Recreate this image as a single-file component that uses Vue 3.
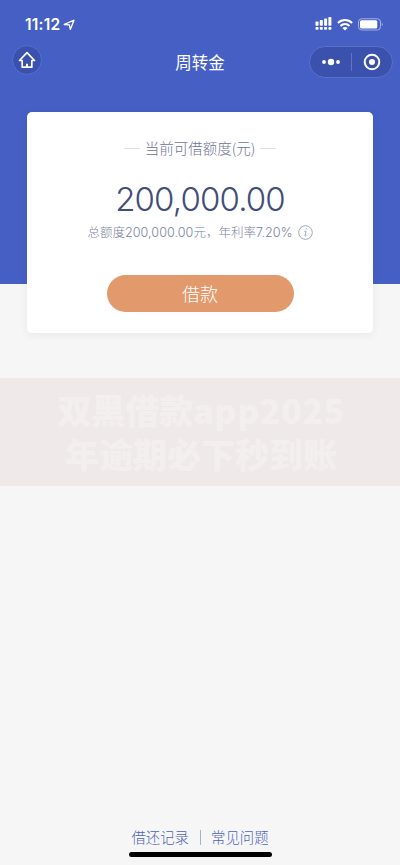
<script setup>
const amount = '200,000.00'
const signalBars = [5, 6.5, 8, 9.5]
const links = ['借还记录', '常见问题']
</script>

<template>
  <div class="page">
    <header class="status">
      <div class="clock">
        <span>11:12</span>
        <svg class="locate" viewBox="0 0 12 12" width="12" height="12">
          <path d="M1.200 5.500 11 1.200 7.300 10.400 6.400 5.800Z" fill="none" stroke="#fff" stroke-width="1.300" stroke-linejoin="round" />
        </svg>
      </div>
      <div class="indicators">
        <svg width="17" height="14" viewBox="0 0 17 14" fill="#fff">
          <template v-for="(h, i) in signalBars" :key="i">
            <rect :x="0.5 + i * 4.3" :y="9.5 - h" width="3" :height="h - 0.8" rx="0.7" />
            <rect :x="0.5 + i * 4.3" y="9.9" width="3" height="2.9" rx="0.8" />
          </template>
        </svg>
        <svg class="wifi" width="16" height="13" viewBox="0 0 16 13" fill="none" stroke="#fff" stroke-width="2.100">
          <path d="M.9 4.900C5 1 11 1 15.100 4.900" />
          <path d="M3.500 7.900C6 5.400 10 5.400 12.500 7.900" />
          <path d="M5.400 10C7 8.600 9 8.600 10.600 10L8 12.600Z" fill="#fff" stroke="none" />
        </svg>
        <svg class="battery" width="26" height="13" viewBox="0 0 26 13">
          <rect x=".5" y=".8" width="22" height="11.200" rx="3.200" fill="none" stroke="#a4b0e4" />
          <rect x="2" y="2.300" width="17.300" height="8.200" rx="1.500" fill="#fff" />
          <path d="M23.800 4.500Q25.900 6.400 23.800 8.300Z" fill="#a4b0e4" />
        </svg>
      </div>
    </header>

    <nav class="navbar">
      <button class="home" aria-label="首页">
        <svg width="18" height="18" viewBox="0 0 18 18" fill="none" stroke="#fff" stroke-width="1.700" stroke-linejoin="round">
          <path d="M9 1.700 1.500 9.500H4.200V16.200H13.800V9.500H16.500Z" />
          <path d="M9 16V12.700" stroke-width="2" />
        </svg>
      </button>
      <h1>周转金</h1>
      <div class="capsule">
        <svg width="20" height="8" viewBox="0 0 20 8" fill="#fff">
          <circle cx="3" cy="4" r="1.900" />
          <circle cx="10" cy="4" r="3.200" />
          <circle cx="17" cy="4" r="1.900" />
        </svg>
        <i class="split"></i>
        <svg width="18" height="18" viewBox="0 0 18 18">
          <circle cx="9" cy="9" r="7.300" fill="none" stroke="#fff" stroke-width="2" />
          <circle cx="9" cy="9" r="3" fill="#fff" />
        </svg>
      </div>
    </nav>

    <section class="card">
      <div class="label"><i></i><span>当前可借额度(元)</span><i></i></div>
      <div class="amount">{{ amount }}</div>
      <div class="detail">
        <span>总额度<b>{{ amount }}</b>元，年利率<b>7.20%</b></span>
        <svg width="15" height="15" viewBox="0 0 15 15" fill="none" stroke="#a1a6bd">
          <circle cx="7.500" cy="7.500" r="6.800" />
          <path d="M6.300 6.200H8L7 10.900H8.300" />
          <circle cx="8.200" cy="3.900" r=".7" fill="#a1a6bd" stroke="none" />
        </svg>
      </div>
      <button class="borrow">借款</button>
    </section>

    <div class="banner">双黑借款<span>app2025</span><br>年逾期必下秒到账</div>

    <footer class="footer">
      <div class="links">
        <a>{{ links[0] }}</a><i></i><a>{{ links[1] }}</a>
      </div>
      <div class="home-bar"></div>
    </footer>
  </div>
</template>

<style>
body {
  background: #f6f6f6;
}
</style>

<style scoped>
.page {
  box-sizing: border-box;
  width: 400px;
  height: 865px;
  display: flex;
  flex-direction: column;
  overflow: hidden;
  background: linear-gradient(#455fc5 284px, #f6f6f6 284px);
  font-family: "Noto Sans CJK SC", sans-serif;
}
button {
  border: 0;
  padding: 0;
  font-family: inherit;
}
svg {
  display: block;
  flex: none;
}
.status {
  height: 46px;
  flex: none;
  box-sizing: border-box;
  padding: 2px 16px 0 25px;
  display: flex;
  align-items: center;
  justify-content: space-between;
}
.clock {
  display: flex;
  align-items: center;
  gap: 3px;
  padding-top: 1px;
  color: #fff;
  font: 600 15.500px/20px Inter, sans-serif;
  letter-spacing: 0.200px;
}
.indicators {
  display: flex;
  align-items: center;
  gap: 5px;
  height: 14px;
}
.navbar {
  height: 32px;
  flex: none;
  padding: 0 7px 0 12px;
  display: grid;
  grid-template-columns: 84px 1fr 84px;
  align-items: center;
}
.home {
  width: 30px;
  height: 30px;
  box-sizing: border-box;
  border: 1px solid #5870cc;
  border-radius: 50%;
  background: #3b51ae;
  display: grid;
  place-items: center;
  margin-top: -4px;
}
h1 {
  margin: -1px 0 0;
  padding-right: 5px;
  text-align: center;
  color: #fff;
  font-size: 16.500px;
  line-height: 32px;
  font-weight: 400;
}
.capsule {
  width: 84px;
  height: 32px;
  box-sizing: border-box;
  border: 1px solid #5b70c7;
  border-radius: 16px;
  background: #3b51ae;
  display: flex;
  align-items: center;
  justify-content: space-between;
  padding: 0 11px;
}
.split {
  width: 1px;
  height: 18px;
  margin-right: 1px;
  background: #6275c4;
}
.card {
  width: 346px;
  height: 221px;
  flex: none;
  box-sizing: border-box;
  margin: 34px 0 0 27px;
  padding-top: 26px;
  border-radius: 5px;
  background: #fff;
  box-shadow: 0 2px 10px rgba(0, 0, 0, 0.060);
  display: flex;
  flex-direction: column;
  align-items: center;
}
.label {
  height: 20px;
  display: flex;
  align-items: center;
  gap: 5px;
  color: #6c7493;
  font-size: 14.500px;
  line-height: 20px;
  font-weight: 300;
}
.label i {
  width: 16px;
  height: 1px;
  background: #dcdee5;
}
.amount {
  margin-top: 21px;
  height: 40px;
  color: #424d78;
  font: 300 33px/40px Inter, sans-serif;
  letter-spacing: -0.850px;
}
.detail {
  margin-top: 3px;
  height: 20px;
  display: flex;
  align-items: center;
  gap: 5px;
  color: #7b829f;
  font-size: 12.500px;
  line-height: 20px;
  font-weight: 300;
  white-space: nowrap;
}
.detail b {
  font: 300 12.600px/20px Inter, sans-serif;
  letter-spacing: 0.050px;
}
.borrow {
  width: 187px;
  height: 37px;
  margin-top: 33px;
  border-radius: 19px;
  background: #e29a6c;
  color: #fff;
  font-size: 18px;
  line-height: 37px;
  font-weight: 300;
}
.banner {
  height: 108px;
  flex: none;
  box-sizing: border-box;
  margin-top: 45px;
  padding: 10px 0 0 2px;
  background: #efe9e9;
  color: #f4efef;
  text-align: center;
  font-size: 34px;
  line-height: 44px;
  font-weight: 900;
}
.banner span {
  letter-spacing: 0.500px;
}
.footer {
  margin-top: auto;
  display: flex;
  flex-direction: column;
  align-items: center;
}
.links {
  height: 20px;
  display: flex;
  align-items: center;
  color: #4c63b8;
  font-size: 14.400px;
  line-height: 20px;
  font-weight: 300;
}
.links i {
  width: 1px;
  height: 15px;
  margin: 0 10px 0 11px;
  background: #a5b0d6;
}
.home-bar {
  width: 143px;
  height: 5px;
  margin: 5px 0 8px;
  border-radius: 3px;
  background: #000;
}
</style>
